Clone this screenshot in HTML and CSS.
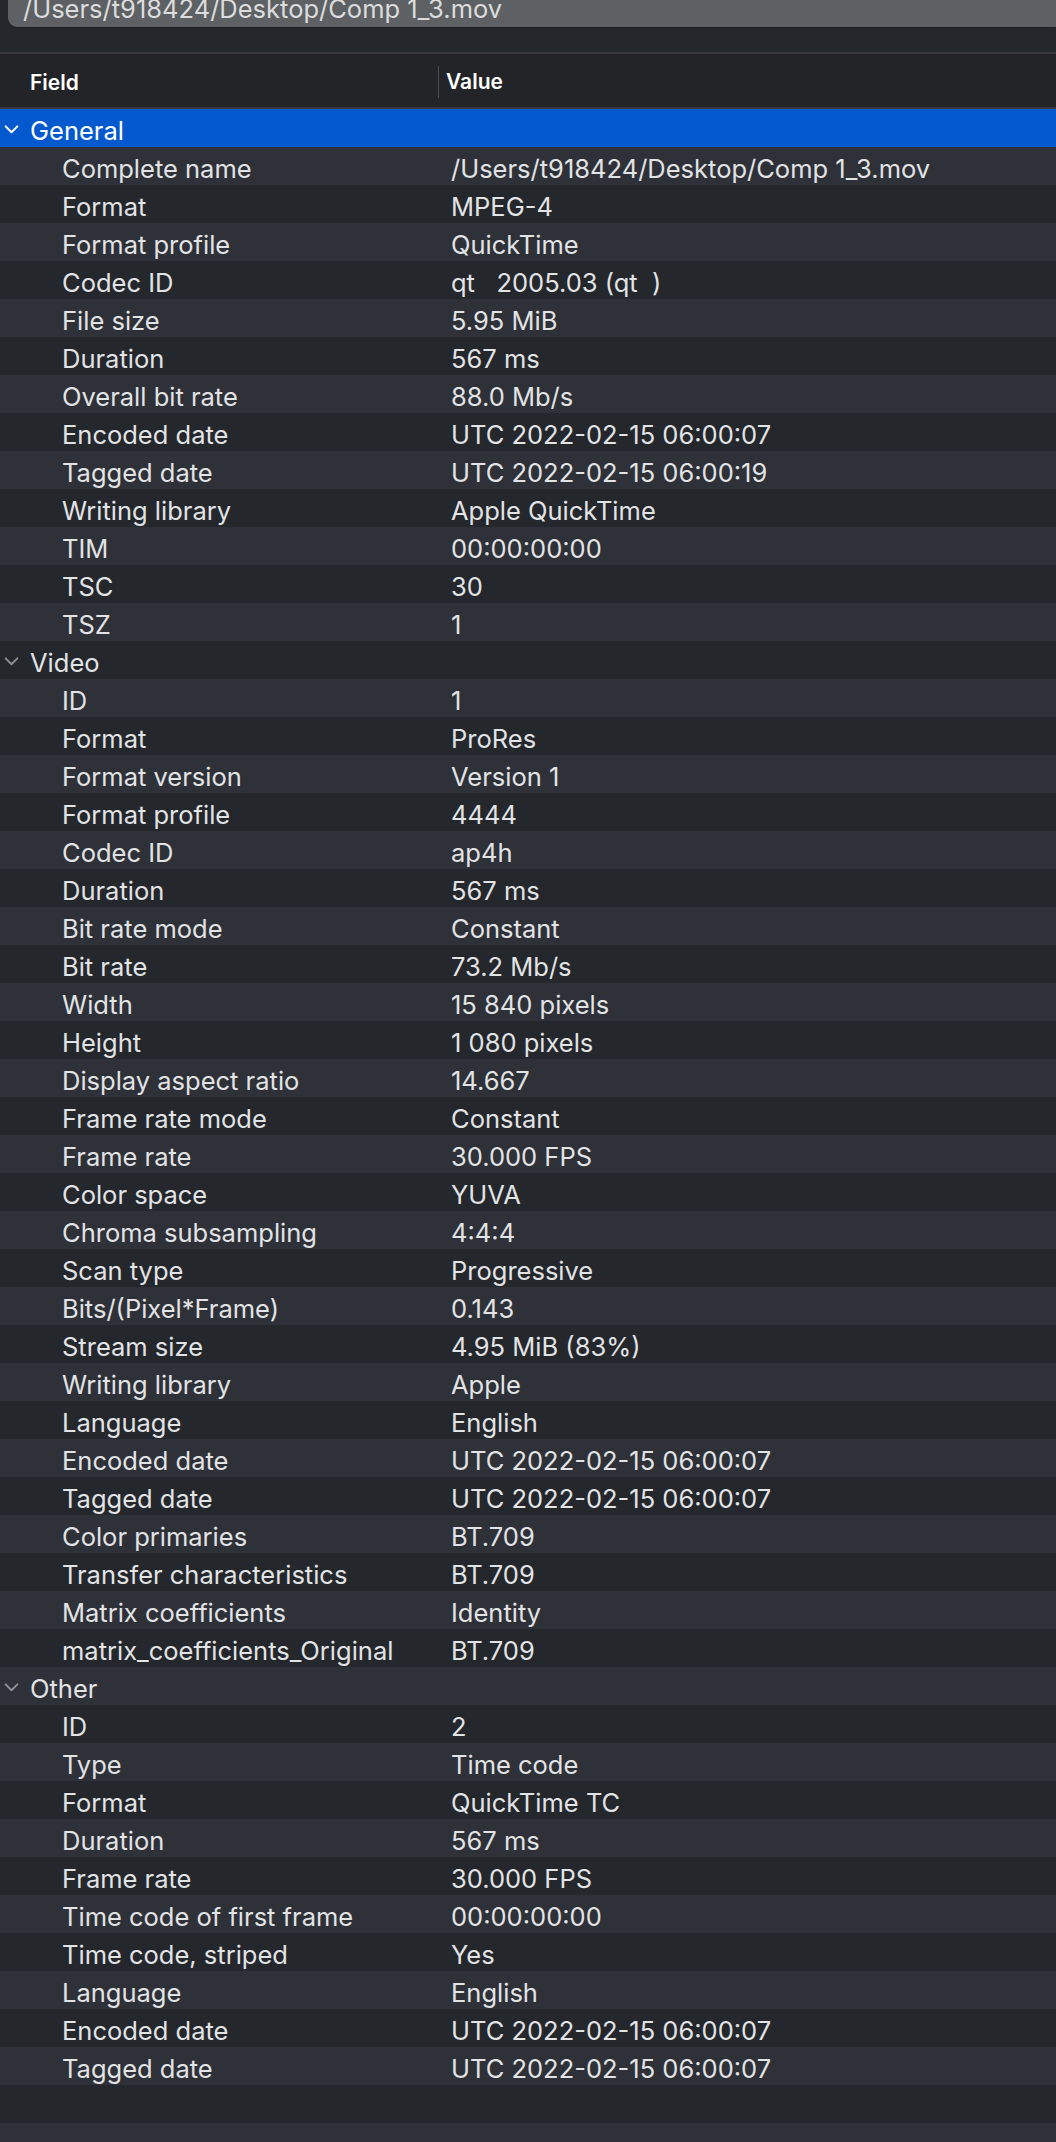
FILE: index.html
```html
<!DOCTYPE html>
<html>
<head>
<meta charset="utf-8">
<link rel="stylesheet" href="styles.css">
</head>
<body>
<div class="pathbar"><div class="path">/Users/t918424/Desktop/Comp 1_3.mov</div></div>
<div class="thead">
  <div class="th">Field</div>
  <div class="th th-value">Value</div>
</div>
<div class="table">
  <div class="row group selected"><svg class="chev" viewBox="0 0 16 10"><path d="M1.5 1.5 L8 8 L14.5 1.5"/></svg><span>General</span></div>
  <div class="row"><span class="f">Complete name</span><span class="v">/Users/t918424/Desktop/Comp 1_3.mov</span></div>
  <div class="row"><span class="f">Format</span><span class="v">MPEG-4</span></div>
  <div class="row"><span class="f">Format profile</span><span class="v">QuickTime</span></div>
  <div class="row"><span class="f">Codec ID</span><span class="v">qt   2005.03 (qt  )</span></div>
  <div class="row"><span class="f">File size</span><span class="v">5.95 MiB</span></div>
  <div class="row"><span class="f">Duration</span><span class="v">567 ms</span></div>
  <div class="row"><span class="f">Overall bit rate</span><span class="v">88.0 Mb/s</span></div>
  <div class="row"><span class="f">Encoded date</span><span class="v">UTC 2022-02-15 06:00:07</span></div>
  <div class="row"><span class="f">Tagged date</span><span class="v">UTC 2022-02-15 06:00:19</span></div>
  <div class="row"><span class="f">Writing library</span><span class="v">Apple QuickTime</span></div>
  <div class="row"><span class="f">TIM</span><span class="v">00:00:00:00</span></div>
  <div class="row"><span class="f">TSC</span><span class="v">30</span></div>
  <div class="row"><span class="f">TSZ</span><span class="v">1</span></div>
  <div class="row group"><svg class="chev" viewBox="0 0 16 10"><path d="M1.5 1.5 L8 8 L14.5 1.5"/></svg><span>Video</span></div>
  <div class="row"><span class="f">ID</span><span class="v">1</span></div>
  <div class="row"><span class="f">Format</span><span class="v">ProRes</span></div>
  <div class="row"><span class="f">Format version</span><span class="v">Version 1</span></div>
  <div class="row"><span class="f">Format profile</span><span class="v">4444</span></div>
  <div class="row"><span class="f">Codec ID</span><span class="v">ap4h</span></div>
  <div class="row"><span class="f">Duration</span><span class="v">567 ms</span></div>
  <div class="row"><span class="f">Bit rate mode</span><span class="v">Constant</span></div>
  <div class="row"><span class="f">Bit rate</span><span class="v">73.2 Mb/s</span></div>
  <div class="row"><span class="f">Width</span><span class="v">15 840 pixels</span></div>
  <div class="row"><span class="f">Height</span><span class="v">1 080 pixels</span></div>
  <div class="row"><span class="f">Display aspect ratio</span><span class="v">14.667</span></div>
  <div class="row"><span class="f">Frame rate mode</span><span class="v">Constant</span></div>
  <div class="row"><span class="f">Frame rate</span><span class="v">30.000 FPS</span></div>
  <div class="row"><span class="f">Color space</span><span class="v">YUVA</span></div>
  <div class="row"><span class="f">Chroma subsampling</span><span class="v">4:4:4</span></div>
  <div class="row"><span class="f">Scan type</span><span class="v">Progressive</span></div>
  <div class="row"><span class="f">Bits/(Pixel*Frame)</span><span class="v">0.143</span></div>
  <div class="row"><span class="f">Stream size</span><span class="v">4.95 MiB (83%)</span></div>
  <div class="row"><span class="f">Writing library</span><span class="v">Apple</span></div>
  <div class="row"><span class="f">Language</span><span class="v">English</span></div>
  <div class="row"><span class="f">Encoded date</span><span class="v">UTC 2022-02-15 06:00:07</span></div>
  <div class="row"><span class="f">Tagged date</span><span class="v">UTC 2022-02-15 06:00:07</span></div>
  <div class="row"><span class="f">Color primaries</span><span class="v">BT.709</span></div>
  <div class="row"><span class="f">Transfer characteristics</span><span class="v">BT.709</span></div>
  <div class="row"><span class="f">Matrix coefficients</span><span class="v">Identity</span></div>
  <div class="row"><span class="f">matrix_coefficients_Original</span><span class="v">BT.709</span></div>
  <div class="row group"><svg class="chev" viewBox="0 0 16 10"><path d="M1.5 1.5 L8 8 L14.5 1.5"/></svg><span>Other</span></div>
  <div class="row"><span class="f">ID</span><span class="v">2</span></div>
  <div class="row"><span class="f">Type</span><span class="v">Time code</span></div>
  <div class="row"><span class="f">Format</span><span class="v">QuickTime TC</span></div>
  <div class="row"><span class="f">Duration</span><span class="v">567 ms</span></div>
  <div class="row"><span class="f">Frame rate</span><span class="v">30.000 FPS</span></div>
  <div class="row"><span class="f">Time code of first frame</span><span class="v">00:00:00:00</span></div>
  <div class="row"><span class="f">Time code, striped</span><span class="v">Yes</span></div>
  <div class="row"><span class="f">Language</span><span class="v">English</span></div>
  <div class="row"><span class="f">Encoded date</span><span class="v">UTC 2022-02-15 06:00:07</span></div>
  <div class="row"><span class="f">Tagged date</span><span class="v">UTC 2022-02-15 06:00:07</span></div>
  <div class="row"></div>
  <div class="row"></div>
</div>
</body>
</html>
```

FILE: styles.css
```css
html, body {
  margin: 0;
  padding: 0;
  background: #24272c;
  overflow: hidden;
}
body {
  font-family: Inter, "Noto Sans", "Liberation Sans", sans-serif;
  color: #e2e3e5;
  width: 1056px;
  height: 2142px;
}
.pathbar {
  height: 54px;
  padding-left: 8px;
  background: #24272c;
  border-bottom: 2px solid #38393d;
  box-sizing: border-box;
}
.path {
  height: 27px;
  box-sizing: border-box;
  background: #5d6164;
  border-radius: 0 0 0 9px;
  box-shadow: 0 1px 1px rgba(0, 0, 0, 0.25);
  color: #dcdcdc;
  font-size: 25.5px;
  line-height: 13px;
  padding-top: 2px;
  padding-left: 15px;
  white-space: nowrap;
  overflow: hidden;
}
.thead {
  height: 55px;
  padding-top: 3px;
  background: #222428;
  border-bottom: 2px solid #36383c;
  box-sizing: border-box;
  display: grid;
  grid-template-columns: 438px 1fr;
  align-items: center;
}
.th {
  font-size: 21px;
  font-weight: 600;
  color: #ffffff;
  padding-left: 30px;
}
.th-value {
  border-left: 1px solid #4b4c50;
  padding-left: 7px;
  line-height: 32px;
}
.row {
  height: 38px;
  box-sizing: border-box;
  padding-top: 5px;
  display: grid;
  grid-template-columns: 451px 1fr;
  align-items: center;
  font-size: 25.5px;
  line-height: 33px;
  white-space: pre;
  background: #24272c;
}
.row:nth-child(even) { background: #2e3138; }
.row .f { padding-left: 62px; }
.row.group {
  display: flex;
  align-items: center;
}
.row.group span { padding-left: 11px; }
.row.selected {
  background: #0459cf;
  color: #ffffff;
}
.chev {
  width: 15px;
  height: 9px;
  margin-left: 4px;
  margin-top: -3px;
  fill: none;
  stroke: #8d8e92;
  stroke-width: 2.2;
  stroke-linecap: round;
  stroke-linejoin: round;
}
.selected .chev { stroke: #ffffff; }
```
